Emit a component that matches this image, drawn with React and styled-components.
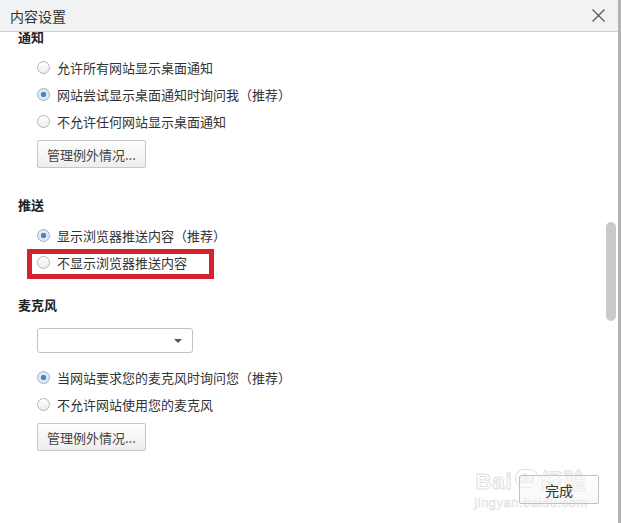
import styled, { createGlobalStyle } from 'styled-components'

const GlobalStyle = createGlobalStyle`
  html, body {
    margin: 0;
    padding: 0;
    background: #ffffff;
  }
  body {
    font-family: "Noto Sans CJK SC", "Liberation Sans", sans-serif;
  }
`

const sections = [
  {
    title: '通知',
    options: [
      { label: '允许所有网站显示桌面通知' },
      { label: '网站尝试显示桌面通知时询问我（推荐）', checked: true },
      { label: '不允许任何网站显示桌面通知' },
    ],
    manage: true,
  },
  {
    title: '推送',
    options: [
      { label: '显示浏览器推送内容（推荐）', checked: true },
      { label: '不显示浏览器推送内容', highlight: true },
    ],
  },
  {
    title: '麦克风',
    select: true,
    options: [
      { label: '当网站要求您的麦克风时询问您（推荐）', checked: true },
      { label: '不允许网站使用您的麦克风' },
    ],
    manage: true,
  },
]

const App = () => {
  return (
    <>
      <GlobalStyle />
      <Dialog>
        <TitleBar>
          <Title>内容设置</Title>
          <CloseButton aria-label="关闭">
            <svg width="13" height="13" viewBox="0 0 13 13">
              <path d="M0.5 0.5 L12.5 12.5 M12.5 0.5 L0.5 12.5" stroke="#555" strokeWidth="1.2" fill="none" />
            </svg>
          </CloseButton>
        </TitleBar>
        <Body>
          <Scroller>
            {sections.map((s) => (
              <Section key={s.title}>
                <SectionTitle>{s.title}</SectionTitle>
                {s.select && (
                  <Select>
                    <Caret />
                  </Select>
                )}
                <Options>
                  {s.options.map((o) => (
                    <OptionRow key={o.label} $highlight={o.highlight}>
                      <Radio $checked={o.checked} />
                      <span>{o.label}</span>
                    </OptionRow>
                  ))}
                </Options>
                {s.manage && <Button>管理例外情况...</Button>}
              </Section>
            ))}
          </Scroller>
          <ScrollThumb />
        </Body>
        <Footer>
          <Watermark>
            <div>Bai<Paw>du</Paw>经验</div>
            <small>jingyan.baidu.com</small>
          </Watermark>
          <DoneButton>完成</DoneButton>
        </Footer>
      </Dialog>
    </>
  )
}

export default App

const Dialog = styled.div`
  width: 618px;
  height: 523px;
  border-right: 3px solid #b3b3b3;
  display: flex;
  flex-direction: column;
  background: #ffffff;
  color: #333333;
  overflow: hidden;
`

const TitleBar = styled.header`
  height: 31px;
  flex-shrink: 0;
  display: flex;
  align-items: center;
  justify-content: space-between;
  padding: 0 13px 0 10px;
  background: #f1f2f4;
  border-bottom: 1px solid #cdd0d4;
`

const Title = styled.h1`
  margin: 0;
  font-size: 14px;
  font-weight: normal;
  color: #333333;
`

const CloseButton = styled.button`
  display: flex;
  padding: 0;
  border: 0;
  background: none;
`

const Body = styled.main`
  position: relative;
  flex: 1;
  overflow: hidden;
`

const Scroller = styled.div`
  margin-top: -5px;
  padding-left: 18px;
`

const Section = styled.section`
  display: flex;
  flex-direction: column;
  align-items: flex-start;
  margin-bottom: 19px;
`

const SectionTitle = styled.h2`
  margin: 0 0 7px;
  height: 20px;
  line-height: 20px;
  font-size: 13px;
  font-weight: bold;
  color: #222222;
`

const Options = styled.div`
  padding-left: 19px;
`

const OptionRow = styled.label`
  position: relative;
  display: flex;
  align-items: center;
  gap: 7px;
  width: max-content;
  height: 27px;
  font-size: 13px;
  color: #333333;

  &::after {
    content: '';
    display: ${(p) => (p.$highlight ? 'block' : 'none')};
    position: absolute;
    left: -10px;
    top: 0;
    width: 187px;
    height: 30px;
    box-sizing: border-box;
    border: 5px solid #d2232f;
  }
`

const Radio = styled.span`
  position: relative;
  width: 13px;
  height: 13px;
  box-sizing: border-box;
  border-radius: 50%;
  border: 1px solid ${(p) => (p.$checked ? '#9fb3c8' : '#b5b5b5')};
  background: ${(p) =>
    p.$checked
      ? 'radial-gradient(circle, #4b86c4 0 2.5px, #dfe9f3 3px)'
      : 'linear-gradient(#ffffff, #ececec)'};
  flex-shrink: 0;
`

const Select = styled.div`
  position: relative;
  margin: 6px 0 11px 19px;
  width: 156px;
  height: 25px;
  box-sizing: border-box;
  border: 1px solid #c2c2c2;
  border-radius: 3px;
  background: #ffffff;
`

const Caret = styled.span`
  position: absolute;
  right: 10px;
  top: 10px;
  width: 0;
  height: 0;
  border-left: 4px solid transparent;
  border-right: 4px solid transparent;
  border-top: 4px solid #555555;
`

const Button = styled.button`
  margin: 5px 0 8px 19px;
  height: 28px;
  padding: 0 9px;
  border: 1px solid #c6c6c6;
  border-radius: 2px;
  background: linear-gradient(#fdfdfd, #eeeeee);
  font-family: inherit;
  font-size: 13px;
  color: #444444;
  white-space: nowrap;
`

const ScrollThumb = styled.div`
  position: absolute;
  right: 2px;
  top: 190px;
  width: 10px;
  height: 99px;
  border-radius: 5px;
  background: #cacaca;
`

const Footer = styled.footer`
  position: relative;
  display: flex;
  justify-content: flex-end;
  padding: 0 19px 19px 0;
`

const DoneButton = styled.button`
  position: relative;
  width: 80px;
  height: 29px;
  border: 1px solid #c2c2c2;
  border-radius: 2px;
  background: linear-gradient(rgba(255, 255, 255, 0.5), rgba(240, 240, 240, 0.5));
  font-family: inherit;
  font-size: 14px;
  color: #333333;
`

const Watermark = styled.div`
  position: absolute;
  right: 31px;
  bottom: 13px;
  width: 112px;
  display: flex;
  flex-direction: column;
  align-items: center;
  font-family: "Liberation Sans", "Noto Sans CJK SC", sans-serif;
  color: rgba(255, 255, 255, 0);
  -webkit-text-stroke: 1px rgba(200, 200, 200, 0.6);
  pointer-events: none;
  white-space: nowrap;

  div {
    display: flex;
    align-items: center;
    font-size: 22px;
    font-weight: bold;
    line-height: 26px;
    letter-spacing: 1px;
  }

  small {
    font-size: 13px;
    line-height: 15px;
    letter-spacing: 0.5px;
    -webkit-text-stroke: 0.6px rgba(200, 200, 200, 0.6);
  }
`

const Paw = styled.span`
  margin: -8px 2px 0;
  padding: 0 3px;
  border: 1px solid rgba(200, 200, 200, 0.6);
  border-radius: 9px;
  font-size: 13px;
  line-height: 17px;
  letter-spacing: 0;
`
